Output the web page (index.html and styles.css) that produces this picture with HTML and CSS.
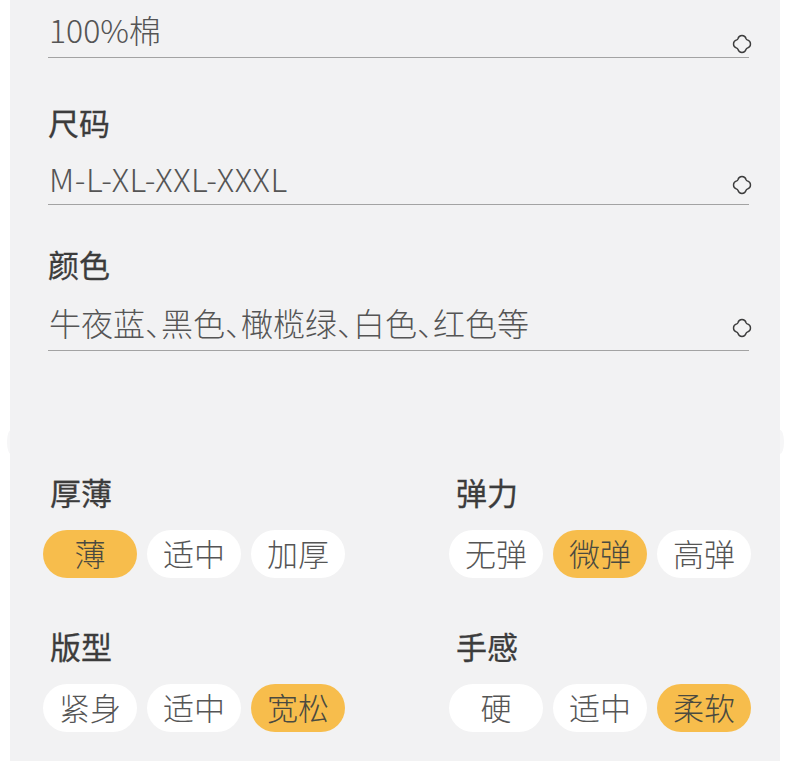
FILE: index.html
```html
<!DOCTYPE html>
<html lang="zh-CN">
<head>
    <meta charset="UTF-8">
    <meta name="viewport" content="width=device-width, initial-scale=1.0">
    <title>商品属性</title>
    <link rel="stylesheet" href="styles.css">
</head>
<body>
    <svg class="icon-defs" width="0" height="0" aria-hidden="true">
        <symbol id="clover" viewBox="0 0 20 20">
            <path d="M10 1.5C12.200 1.500 13.600 3.000 14.100 4.700C14.300 5.200 14.800 5.700 15.300 5.900C17.000 6.400 18.500 7.800 18.500 10C18.500 12.200 17.000 13.600 15.300 14.100C14.800 14.300 14.300 14.800 14.100 15.300C13.600 17.000 12.200 18.500 10 18.500C7.800 18.500 6.400 17.000 5.900 15.300C5.700 14.800 5.200 14.300 4.700 14.100C3.000 13.600 1.500 12.200 1.500 10C1.500 7.800 3.000 6.400 4.700 5.900C5.200 5.700 5.700 5.200 5.900 4.700C6.400 3.000 7.800 1.500 10 1.500Z" fill="none" stroke="#3c3c3c" stroke-width="1.400"/>
        </symbol>
    </svg>

    <main class="panel">
        <section class="fields">
            <div class="field field-material">
                <div class="field-value">
                    <span>100%棉</span>
                    <svg class="clover"><use href="#clover"></use></svg>
                </div>
            </div>
            <div class="field field-size">
                <h2 class="field-label">尺码</h2>
                <div class="field-value">
                    <span>M-L-XL-XXL-XXXL</span>
                    <svg class="clover"><use href="#clover"></use></svg>
                </div>
            </div>
            <div class="field field-color">
                <h2 class="field-label">颜色</h2>
                <div class="field-value">
                    <span>牛夜蓝、黑色、橄榄绿、白色、红色等</span>
                    <svg class="clover"><use href="#clover"></use></svg>
                </div>
            </div>
        </section>

        <section class="options">
            <div class="option">
                <h2 class="option-title">厚薄</h2>
                <div class="pills">
                    <span class="pill active">薄</span>
                    <span class="pill">适中</span>
                    <span class="pill">加厚</span>
                </div>
            </div>
            <div class="option">
                <h2 class="option-title">弹力</h2>
                <div class="pills">
                    <span class="pill">无弹</span>
                    <span class="pill active">微弹</span>
                    <span class="pill">高弹</span>
                </div>
            </div>
            <div class="option">
                <h2 class="option-title">版型</h2>
                <div class="pills">
                    <span class="pill">紧身</span>
                    <span class="pill">适中</span>
                    <span class="pill active">宽松</span>
                </div>
            </div>
            <div class="option">
                <h2 class="option-title">手感</h2>
                <div class="pills">
                    <span class="pill">硬</span>
                    <span class="pill">适中</span>
                    <span class="pill active">柔软</span>
                </div>
            </div>
        </section>
    </main>
</body>
</html>
```

FILE: styles.css
```css
:root {
    --page: #ffffff;
    --panel: #f2f2f3;
    --text: #3c3c3c;
    --text-light: #555555;
    --line: #a3a3a3;
    --accent: #f7bd4c;
}

* {
    margin: 0;
    padding: 0;
    box-sizing: border-box;
}

html,
body {
    height: 100%;
    overflow: hidden;
}

body {
    background: var(--page);
    color: var(--text);
    font-family: "Noto Sans CJK SC", "Noto Sans", sans-serif;
}

.icon-defs {
    position: absolute;
}

.panel {
    width: 770px;
    height: 761px;
    margin-left: 10px;
    background: var(--panel);
    position: relative;
}

.panel::before,
.panel::after {
    content: '';
    position: absolute;
    top: 430px;
    width: 8px;
    height: 24px;
    border-radius: 50%;
    background: #f6f6f7;
    z-index: -1;
}

.panel::before {
    left: -3px;
}

.panel::after {
    right: -4px;
}

.fields {
    padding: 0 31px 0 38px;
}

.field-label {
    font-size: 31px;
    font-weight: 400;
    line-height: 40px;
    color: var(--text);
    -webkit-text-stroke: 0.3px var(--text);
}

.field-value {
    display: flex;
    justify-content: space-between;
    align-items: flex-end;
    border-bottom: 1px solid var(--line);
    padding-left: 1px;
    font-size: 32px;
    font-weight: 300;
    line-height: 40px;
    color: var(--text-light);
}

.clover {
    width: 20px;
    height: 20px;
    flex: none;
    margin-right: -3px;
}

.field-material .field-value {
    height: 58px;
    padding-bottom: 8px;
}

.field-material .clover {
    margin-bottom: -5px;
}

.field-size {
    margin-top: 44px;
}

.field-size .field-value {
    height: 63px;
    padding-bottom: 6px;
    letter-spacing: 0.6px;
}

.field-size .clover {
    margin-bottom: 3px;
}

.field-color {
    margin-top: 39px;
}

.field-color .field-value {
    height: 67px;
    padding-bottom: 8px;
    font-feature-settings: "halt";
}

.field-color .clover {
    margin-bottom: 4px;
}

.options {
    display: grid;
    grid-template-columns: 406px 302px;
    row-gap: 48px;
    margin-top: 121px;
    padding-left: 33px;
}

.option-title {
    font-size: 31px;
    font-weight: 400;
    line-height: 40px;
    padding-left: 7px;
    margin-bottom: 18px;
    -webkit-text-stroke: 0.3px var(--text);
}

.pills {
    display: flex;
    gap: 10px;
}

.pill {
    width: 94px;
    height: 48px;
    padding-bottom: 4px;
    border-radius: 24px;
    background: #ffffff;
    display: flex;
    align-items: center;
    justify-content: center;
    font-size: 31px;
    font-weight: 300;
    color: var(--text-light);
}

.pill.active {
    background: var(--accent);
    color: #4a4a40;
}
```
